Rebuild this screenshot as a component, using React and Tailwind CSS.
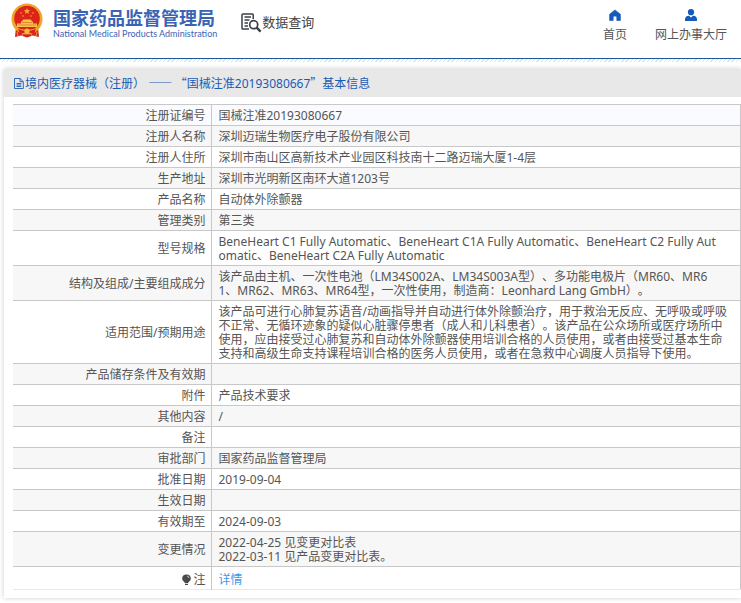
import React from 'react';

const rows = [
    { label: '注册证编号', lines: ['国械注准20193080667'] },
    { label: '注册人名称', lines: ['深圳迈瑞生物医疗电子股份有限公司'] },
    { label: '注册人住所', lines: ['深圳市南山区高新技术产业园区科技南十二路迈瑞大厦1-4层'] },
    { label: '生产地址', lines: ['深圳市光明新区南环大道1203号'] },
    { label: '产品名称', lines: ['自动体外除颤器'] },
    { label: '管理类别', lines: ['第三类'] },
    {
        label: '型号规格',
        lines: [
            'BeneHeart C1 Fully Automatic、BeneHeart C1A Fully Automatic、BeneHeart C2 Fully Aut',
            'omatic、BeneHeart C2A Fully Automatic',
        ],
    },
    {
        label: '结构及组成/主要组成成分',
        lines: [
            '该产品由主机、一次性电池（LM34S002A、LM34S003A型）、多功能电极片（MR60、MR6',
            '1、MR62、MR63、MR64型，一次性使用，制造商：Leonhard Lang GmbH）。',
        ],
    },
    {
        label: '适用范围/预期用途',
        lines: [
            '该产品可进行心肺复苏语音/动画指导并自动进行体外除颤治疗，用于救治无反应、无呼吸或呼吸',
            '不正常、无循环迹象的疑似心脏骤停患者（成人和儿科患者）。该产品在公众场所或医疗场所中',
            '使用，应由接受过心肺复苏和自动体外除颤器使用培训合格的人员使用，或者由接受过基本生命',
            '支持和高级生命支持课程培训合格的医务人员使用，或者在急救中心调度人员指导下使用。',
        ],
    },
    { label: '产品储存条件及有效期', lines: [] },
    { label: '附件', lines: ['产品技术要求'] },
    { label: '其他内容', lines: ['/'] },
    { label: '备注', lines: [] },
    { label: '审批部门', lines: ['国家药品监督管理局'] },
    { label: '批准日期', lines: ['2019-09-04'] },
    { label: '生效日期', lines: [] },
    { label: '有效期至', lines: ['2024-09-03'] },
    { label: '变更情况', lines: ['2022-04-25 见变更对比表', '2022-03-11 见产品变更对比表。'] },
];

const Emblem = () => (
    <svg className="h-[36px] w-[32px]" viewBox="0 0 32 36" aria-hidden="true">
        <path d="M5 24 L4 34 L10 32.5 L16 34.5 L22 32.5 L28 34 L27 24 Z" fill="#d2231c" />
        <circle cx="16" cy="16" r="15.5" fill="#eda62b" />
        <circle cx="16" cy="15.5" r="12.8" fill="#dc2418" />
        <path d="M16 5 l.9 2.1 2.3.2-1.8 1.5.6 2.2-2-1.2-2 1.2.6-2.2-1.8-1.5 2.3-.2z" fill="#f4a93c" />
        <g fill="#f4a93c">
            <circle cx="10" cy="10" r=".8" />
            <circle cx="22" cy="10" r=".8" />
            <circle cx="12" cy="13" r=".8" />
            <circle cx="20" cy="13" r=".8" />
        </g>
        <path d="M10 19 L12.5 16.5 H19.5 L22 19 V20.5 H26 V24 H6 V20.5 H10 Z" fill="#f7c64a" />
        <path d="M11 19.4 H21 M7 22 H25" stroke="#d9541f" strokeWidth=".6" />
        <path d="M4 24 Q16 30 28 24 L26 28 Q16 32 6 28 Z" fill="#eda62b" />
        <path d="M7 26 Q16 30 25 26 L23 31 L16 29 L9 31 Z" fill="#d2231c" />
        <circle cx="16" cy="28" r="2.6" fill="#f3bd3b" />
        <path d="M6 29 L7 33 M26 29 L25 33 M12 31 L11 33 M20 31 L21 33" stroke="#f3bd3b" strokeWidth=".8" />
    </svg>
);

const SearchDocIcon = () => (
    <svg className="h-[20px] w-[21px]" viewBox="0 0 21 20" fill="none" stroke="#3c3f48" aria-hidden="true">
        <path d="M12.2 6 V1.8 Q12.2 1 11.4 1 H1.8 Q1 1 1 1.8 V15.2 Q1 16 1.8 16 H8" strokeWidth="1.5" />
        <path d="M3.5 4 H10 M3.5 7 H8.5 M3.5 10 H7 M3.5 13 H7" strokeWidth="1.3" />
        <circle cx="12.7" cy="11.7" r="4" strokeWidth="1.7" />
        <path d="M15.7 14.7 L19.6 18.6" strokeWidth="2.4" />
    </svg>
);

const Header = () => (
    <header>
        <div className="flex h-[59px] items-start border-b border-[#1d5a94] pl-[11px] pr-[14px]">
            <a href="#" className="flex items-start gap-[10px] pt-[3px]">
                <Emblem />
                <span className="flex flex-col pt-1 whitespace-nowrap text-[#3a63b4]">
                    <span className="text-[18px] leading-[22px] font-bold">国家药品监督管理局</span>
                    <span className="font-['Lato','Liberation_Sans',sans-serif] text-[9px] leading-[10px]">
                        National Medical Products Administration
                    </span>
                </span>
            </a>
            <a href="#" className="ml-[24px] flex items-start pt-[13px] whitespace-nowrap text-[#444]">
                <SearchDocIcon />
                <span className="text-[13px] leading-[18px]">数据查询</span>
            </a>
            <nav className="ml-auto flex gap-[28px] whitespace-nowrap text-[12px] leading-[18px] text-[#555]">
                <a href="#" className="flex flex-col items-center gap-[5px] pt-[9px]">
                    <svg className="h-[12px] w-[12px]" viewBox="0 0 12 12" aria-hidden="true">
                        <path d="M6 .9 L11.4 5.2 V11.5 H7.8 V8.4 Q7.8 7 6 7 Q4.2 7 4.2 8.4 V11.5 H.6 V5.2 Z" fill="#155bbd" stroke="#155bbd" strokeWidth=".6" strokeLinejoin="round" />
                    </svg>
                    首页
                </a>
                <a href="#" className="flex flex-col items-center gap-[5px] pt-[9px]">
                    <svg className="h-[12px] w-[12px]" viewBox="0 0 12 12" fill="#155bbd" aria-hidden="true">
                        <circle cx="6" cy="3.2" r="3.1" />
                        <path d="M0 12 V10.5 Q0 7 4 6.8 L6 8.6 L8 6.8 Q12 7 12 10.5 V12 Z" />
                    </svg>
                    网上办事大厅
                </a>
            </nav>
        </div>
        <div className="h-[3px] bg-[repeating-linear-gradient(135deg,#cfe8f8_0_1px,#fff_1px_3px)]" />
    </header>
);

const DetailTable = () => (
    <table className="w-full table-fixed border-collapse border-r border-[#c8c8c8] text-[12px] leading-[14px]">
        <colgroup>
            <col className="w-[198px]" />
            <col />
        </colgroup>
        <tbody>
            {rows.map((row, index) => (
                <tr
                    key={row.label}
                    className={`border-t border-[#c8c8c8] ${index === 0 ? 'bg-[#f9fbfe]' : index % 2 ? 'bg-[#f7f7f7]' : 'bg-white'}`}
                >
                    <th scope="row" className="border-r border-[#c8c8c8] pt-1 pr-[5px] pb-[2px] text-right font-normal">
                        {row.label}
                    </th>
                    <td className="pt-1 pb-[2px] pl-[7px] whitespace-pre">{row.lines.join('\n')}</td>
                </tr>
            ))}
            <tr className="border-t border-b border-t-[#c8c8c8] border-b-[#e8e8e8]">
                <th scope="row" className="border-r border-[#c8c8c8] pt-[6px] pr-[5px] pb-[2px] text-right font-normal">
                    <span className="flex items-center justify-end gap-[2px]">
                        <svg className="h-[12px] w-[9px]" viewBox="0 0 9 12" aria-hidden="true">
                            <path d="M4.5 .5 A4 4 0 0 0 2.3 8 L3 9.2 H6 L6.7 8 A4 4 0 0 0 4.5 .5 Z M3 10 H6 V11 H3 Z" fill="#4a4a4a" />
                            <path d="M5 2 Q6.8 2.3 7 4" fill="none" stroke="#fff" strokeWidth=".7" />
                        </svg>
                        注
                    </span>
                </th>
                <td className="pt-[6px] pb-[2px] pl-[7px]">
                    <a href="#" className="text-[#3e97e8]">详情</a>
                </td>
            </tr>
        </tbody>
    </table>
);

const App = () => {
    return (
        <div lang="zh-CN" className="overflow-hidden bg-white pb-[6px] font-['Noto_Sans','Noto_Sans_CJK_SC',sans-serif] text-[#555] [text-spacing-trim:space-all]">
            <Header />
            <main className="mt-[7px] ml-1 bg-white pb-2 shadow-[0_0_5px_rgba(0,0,0,0.2)]">
                <h1 className="flex h-[28px] items-center bg-[#e8e8e8] pt-px pl-[10px] text-[12px] leading-[18px] whitespace-pre text-[#1a5cb4]">
                    <svg className="mr-px h-[11px] w-[10px]" viewBox="0 0 10 11" fill="none" stroke="#1a5cb4" strokeWidth=".9" aria-hidden="true">
                        <path d="M.5 .5 H6 L9.3 3.7 V10.5 H.5 Z M6 .5 V3.7 H9.3 M2.5 5.5 H7.3 M2.5 7 H7.3 M2.5 8.5 H7.3" />
                    </svg>
                    <span>
                        境内医疗器械（注册） <span className="font-['Noto_Sans_CJK_SC',sans-serif]">—— “</span>
                        国械注准20193080667
                        <span className="font-['Noto_Sans_CJK_SC',sans-serif]">”</span>基本信息
                    </span>
                </h1>
                <div className="pt-[7px] pl-[9px]">
                    <DetailTable />
                </div>
            </main>
        </div>
    );
};

export default App;
